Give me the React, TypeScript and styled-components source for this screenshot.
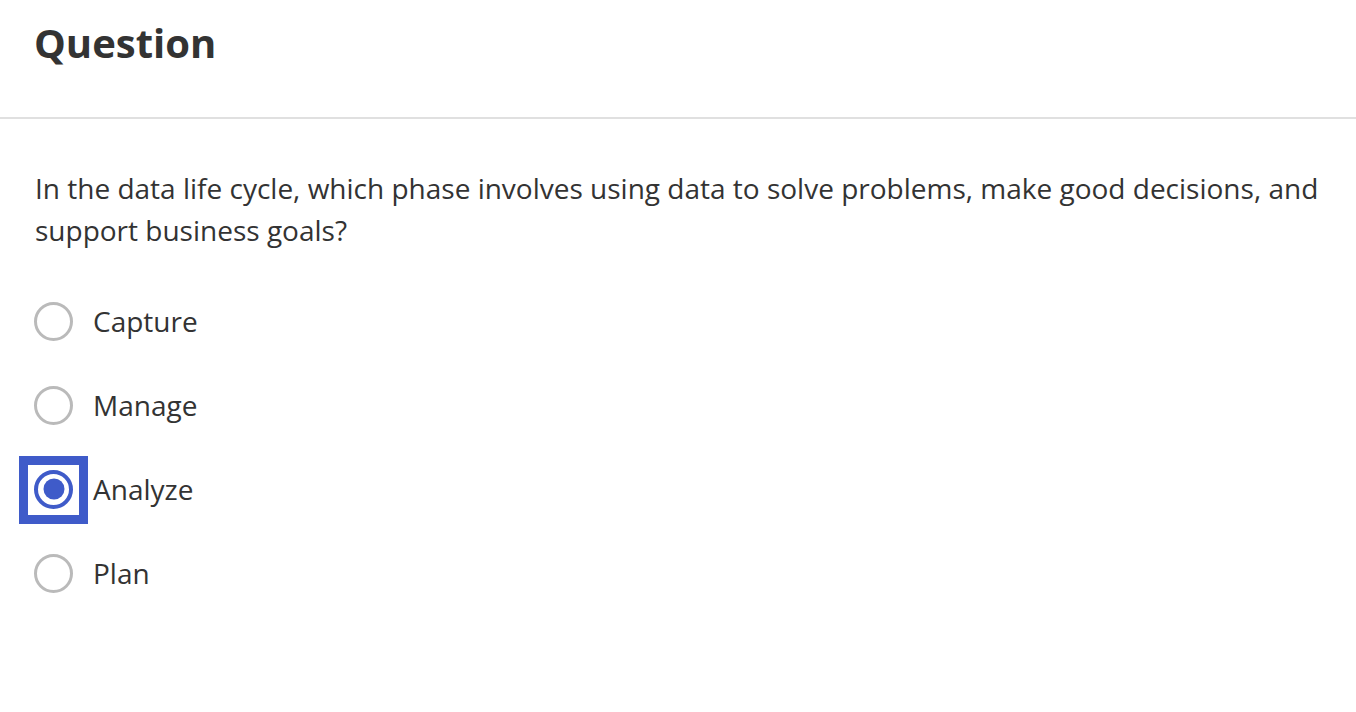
import React, { useState } from "react";
import styled, { createGlobalStyle } from "styled-components";

const Global = createGlobalStyle`
  html, body { margin: 0; padding: 0; background: #fff; }
  body { font-family: "Open Sans", "Liberation Sans", sans-serif; color: #333; }
`;

const Page = styled.div`
  width: 1356px;
  height: 712px;
  background: #fff;
  overflow: hidden;
`;

const Header = styled.header`
  height: 119px;
  border-bottom: 2px solid #e0e0e0;
  padding: 0 35px;
  box-sizing: border-box;
  display: flex;
  align-items: flex-start;
`;

const Title = styled.h1`
  margin: 13px 0 0 -1px;
  font-size: 40px;
  line-height: 60px;
  font-weight: 700;
  color: #333;
`;

const Body = styled.div`
  padding: 48px 35px 0;
`;

const Prompt = styled.p`
  margin: 0;
  font-size: 28px;
  line-height: 42px;
  color: #333;
`;

const Options = styled.div`
  margin-top: 49px;
  display: flex;
  flex-direction: column;
  gap: 42px;
`;

const Option = styled.label`
  display: flex;
  align-items: center;
  gap: 20px;
  height: 42px;
  cursor: pointer;
`;

const Focus = styled.span<{ $on: boolean }>`
  display: flex;
  align-items: center;
  justify-content: center;
  width: 39px;
  height: 39px;
  margin-left: -1px;
  flex-shrink: 0;
  position: relative;
  &::before {
    content: "";
    display: ${(p) => (p.$on ? "block" : "none")};
    position: absolute;
    left: -15px;
    top: -14px;
    width: 69px;
    height: 68px;
    box-sizing: border-box;
    border: 9px solid #3f5bc9;
  }
`;

const Radio = styled.span<{ $checked: boolean }>`
  position: relative;
  width: 39px;
  height: 39px;
  box-sizing: border-box;
  border-radius: 50%;
  border: ${(p) => (p.$checked ? "4px solid #3f5bc9" : "3.5px solid #bababa")};
  &::after {
    content: "";
    display: ${(p) => (p.$checked ? "block" : "none")};
    position: absolute;
    left: 50%;
    top: 50%;
    width: 21px;
    height: 21px;
    border-radius: 50%;
    background: #3f5bc9;
    transform: translate(-50%, -50%);
  }
`;

const Label = styled.span`
  font-size: 28px;
  line-height: 42px;
  color: #333;
`;

const options = ["Capture", "Manage", "Analyze", "Plan"];

export default function App() {
  const [selected, setSelected] = useState("Analyze");
  return (
    <Page>
      <Global />
      <Header>
        <Title>Question</Title>
      </Header>
      <Body>
        <Prompt>
          In the data life cycle, which phase involves using data to solve problems, make good decisions, and
          support business goals?
        </Prompt>
        <Options>
          {options.map((o) => (
            <Option key={o} onClick={() => setSelected(o)}>
              <Focus $on={selected === o}>
                <Radio $checked={selected === o} />
              </Focus>
              <Label>{o}</Label>
            </Option>
          ))}
        </Options>
      </Body>
    </Page>
  );
}
